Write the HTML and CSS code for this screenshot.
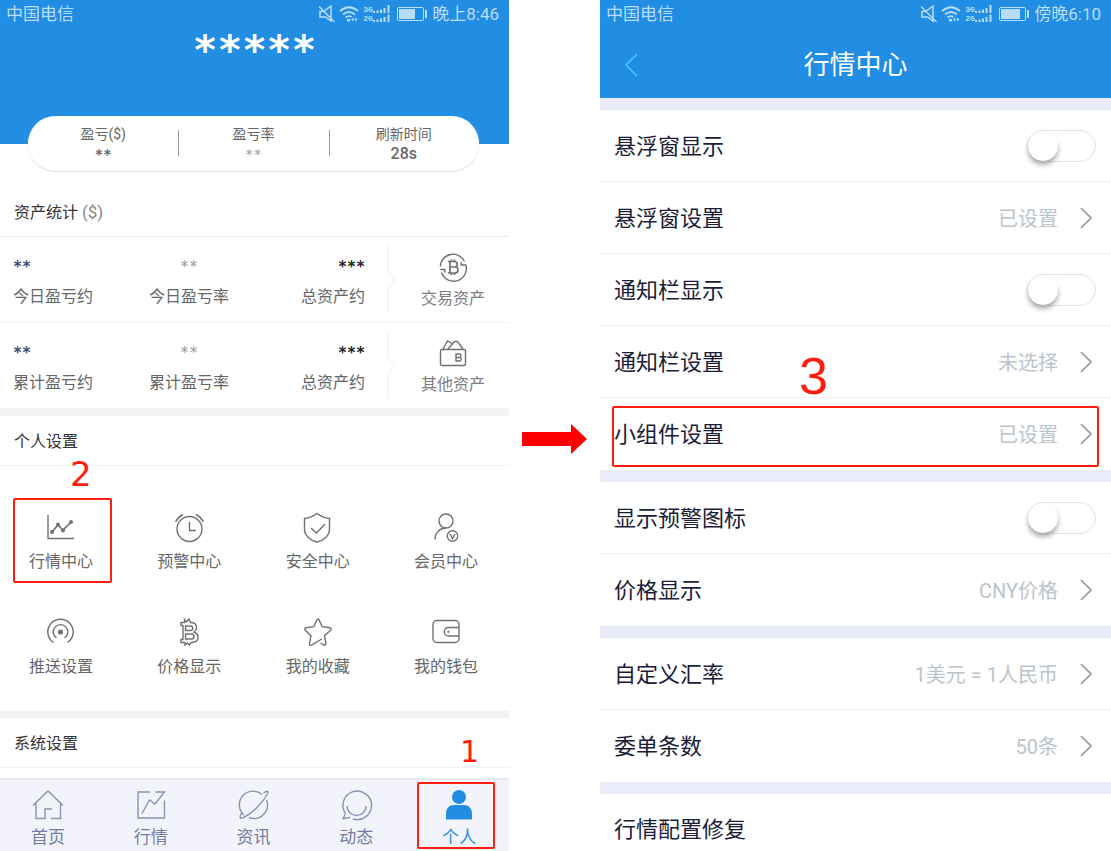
FILE: index.html
```html
<!DOCTYPE html>
<html lang="zh-CN">
<head>
<meta charset="utf-8">
<title>行情中心 小组件设置</title>
<link rel="stylesheet" href="styles.css">
</head>
<body>
<svg class="defs" aria-hidden="true">
  <symbol id="mute" viewBox="0 0 16 18"><path d="M1 6.500h3.500L12 1v15L6.500 12H1zM0 1.500L15.500 17"/></symbol>
  <symbol id="wifi" viewBox="0 0 20 16"><path d="M1 5Q10-2.500 19 5M4 8.500Q10 3.500 16 8.500M6.500 11.500Q9.500 9 12.500 11"/><path class="solid" d="M8 13h3v2.500H8zM12 13.500l2.500-2v4zM18.500 13.500l-2.500-2v4z"/></symbol>
  <symbol id="bars" viewBox="0 0 18 18"><path d="M1 6v2M4.500 5.500V8M8 4.500V8M11.500 3v5M15.500 0v8M1 15v2M4.500 14.500V17M8 13.500V17M11.500 12v5M15.500 9.500V17"/></symbol>
  <symbol id="notch" viewBox="0 0 10 68"><path d="M1 0v27l7 8-7 8v25"/></symbol>
  <symbol id="chevron" viewBox="0 0 12 22"><path d="M1 1l10 10L1 21"/></symbol>
</svg>
<main class="board">
  <section class="phone">
    <header class="hero">
      <div class="status">
        <span>中国电信</span>
        <div class="status-right">
          <svg class="ic-mute"><use href="#mute"/></svg>
          <svg class="ic-wifi"><use href="#wifi"/></svg>
          <span class="nets"><b>3G</b><b>2G</b></span>
          <svg class="ic-bars"><use href="#bars"/></svg>
          <span class="battery"><i class="low"></i></span>
          <span>晚上8:46</span>
        </div>
      </div>
      <div class="secret">*****</div>
    </header>
    <div class="pill">
      <div><span>盈亏($)</span><b class="stars">**</b></div>
      <div><span>盈亏率</span><b class="stars faint">**</b></div>
      <div><span>刷新时间</span><b>28s</b></div>
    </div>
    <h2 class="heading first">资产统计 <small>($)</small></h2>
    <div class="assets">
      <div class="stats">
        <div><b class="stars navy">**</b><span>今日盈亏约</span></div>
        <div><b class="stars faint">**</b><span>今日盈亏率</span></div>
        <div><b class="stars dark">***</b><span>总资产约</span></div>
      </div>
      <svg class="notch"><use href="#notch"/></svg>
      <button class="action" type="button">
        <svg class="icon" viewBox="0 0 32 32"><path d="M3.300 15.500A12.700 12.700 0 0 1 27.500 10.500M28.700 13.500A12.700 12.700 0 0 1 4.500 21.500M28.700 14h-4.500v-3M3.300 18.500h4.500v3"/><path class="thick" d="M11 10.500h6.500a2.700 2.700 0 0 1 0 5.500H13h5a3 3 0 0 1 0 6h-7M13 10.500V22M14.500 8.500v2M17.500 8.500v2M14.500 22v2M17.500 22v2"/></svg>
        <span>交易资产</span>
      </button>
    </div>
    <div class="assets">
      <div class="stats">
        <div><b class="stars navy">**</b><span>累计盈亏约</span></div>
        <div><b class="stars faint">**</b><span>累计盈亏率</span></div>
        <div><b class="stars dark">***</b><span>总资产约</span></div>
      </div>
      <svg class="notch"><use href="#notch"/></svg>
      <button class="action" type="button">
        <svg class="icon" viewBox="0 0 32 32"><rect x="3.500" y="12.500" width="25" height="16" rx="1.500"/><path d="M6 12l4.500-8 4.500 2.500M11 12l6.500-7.500h3L26 12"/><path d="M19 17h3.200a1.600 1.600 0 0 1 0 3.500H19h3.500a1.700 1.700 0 0 1 0 3.500H19z"/></svg>
        <span>其他资产</span>
      </button>
    </div>
    <div class="band"></div>
    <h2 class="heading">个人设置</h2>
    <div class="tiles">
      <button class="tile" type="button">
        <svg class="icon" viewBox="0 0 32 32"><path d="M3 4v23.500h26"/><path class="thick" d="M7 21l6-7 5 5 8-8"/><g class="solid"><circle cx="7" cy="21" r="2"/><circle cx="13" cy="13.500" r="2"/><circle cx="18" cy="19.500" r="2"/><circle cx="26" cy="11" r="2"/></g></svg>
        <span>行情中心</span><i class="ring"></i><b class="note two">2</b>
      </button>
      <button class="tile" type="button">
        <svg class="icon" viewBox="0 0 32 32"><circle cx="16.500" cy="18" r="12.500"/><path d="M2.500 11Q5 6 10 3.500M23 3.500Q28 6 30.500 11M16.500 11v8.500h6.500"/></svg>
        <span>预警中心</span>
      </button>
      <button class="tile" type="button">
        <svg class="icon" viewBox="0 0 32 32"><path d="M15 2.500C11 5.500 7 7 2.500 7.500V18C2.500 25 9 30 15 31c6-1 12.500-6 12.500-13V7.500C23 7 19 5.500 15 2.500zM9 17l5.500 5 8.500-9"/></svg>
        <span>安全中心</span>
      </button>
      <button class="tile" type="button">
        <svg class="icon" viewBox="0 0 32 32"><circle cx="16" cy="10" r="7"/><path d="M16 17C10 17 5 21.500 5 28.500"/><circle cx="22.500" cy="25" r="5.200"/><path d="M20 23l2.500 4.500L25 23"/></svg>
        <span>会员中心</span>
      </button>
      <button class="tile" type="button">
        <svg class="icon" viewBox="0 0 32 32"><path d="M8.500 26.500A12.700 12.700 0 1 1 22.500 26.500M11.500 22A7.300 7.300 0 1 1 19.500 22"/><circle class="solid" cx="15.500" cy="16" r="2.600"/></svg>
        <span>推送设置</span>
      </button>
      <button class="tile" type="button">
        <svg class="icon" viewBox="0 0 32 32"><path d="M8 6.500h3.500v-3l2 2.500L16 3l1.500 3.500C22 6.500 23.500 9 23.500 11.500 23.500 14 22.500 15 21 16c3 1 4 3 4 5.500 0 3.500-3 5-7 5L16.500 29l-2-2-2.500 2v-2.500H8v-3h2v-14H8z"/><path d="M12.500 10h5a2.200 2.200 0 0 1 0 4.500h-5zM12.500 18h6a2.300 2.300 0 0 1 0 5h-6z"/></svg>
        <span>价格显示</span>
      </button>
      <button class="tile" type="button">
        <svg class="icon" viewBox="0 0 32 32"><path d="M20 23l-4.500 2.500-6 3.700q-2 .800-2-1.500l1.500-8-5.700-5.500q-1.500-2 1-2.500l7.500-1 3-6.500q1.200-2 2.400 0l3 6.500 7.500 1q2.500.500 1 2.500L22.500 19.500l1.500 8q0 2.300-2 1.500l-3.500-2"/></svg>
        <span>我的收藏</span>
      </button>
      <button class="tile" type="button">
        <svg class="icon" viewBox="0 0 32 32"><rect x="3" y="4.500" width="26" height="22" rx="4"/><path d="M29 11.500H18.500a4 4 0 0 0 0 8.500H29"/><circle class="solid" cx="18.500" cy="15.800" r="1.100"/></svg>
        <span>我的钱包</span>
      </button>
    </div>
    <div class="band"></div>
    <h2 class="heading">系统设置</h2>
    <nav class="tabs">
      <a href="#home"><svg class="icon" viewBox="0 0 32 32"><path d="M1 16.500L16 2l15 14.500M4 14v15.500h9V20h7M28.500 14v15.500H19"/></svg><span>首页</span></a>
      <a href="#market"><svg class="icon" viewBox="0 0 32 32"><path d="M15 3H3v26h26.500V11.500M20.500 3h9L20 15l-5.500-4L7 24.500"/></svg><span>行情</span></a>
      <a href="#news"><svg class="icon" viewBox="0 0 32 32"><path d="M24 5.500A13.500 13.500 0 0 0 6 26M28.500 11A13.500 13.500 0 0 1 11 28.500M3.500 24C1 29 2 30.500 5.500 28.500 15 24 25 13 29.500 5 31 1.500 29 1.500 25.500 4"/></svg><span>资讯</span></a>
      <a href="#feed"><svg class="icon" viewBox="0 0 32 32"><path d="M5.500 24.500A14.300 14.300 0 1 1 13 30M5.500 24.500L3 29.500l7-1M7 17a9.500 9.500 0 0 0 19 0"/></svg><span>动态</span></a>
      <a class="current" href="#me"><svg class="icon" viewBox="0 0 32 32"><g class="solid"><circle cx="16" cy="8" r="7"/><path d="M3 30.500V25c0-6 3.500-9 8-9h10c4.500 0 8 3 8 9v5.500z"/></g></svg><span>个人</span><i class="ring"></i><b class="note one">1</b></a>
    </nav>
  </section>

  <div class="between"><svg class="arrow" viewBox="0 0 65 30"><path d="M0 8h49V0l16 15-16 15v-8H0z"/></svg></div>

  <section class="phone">
    <header class="bar">
      <div class="status">
        <span>中国电信</span>
        <div class="status-right">
          <svg class="ic-mute"><use href="#mute"/></svg>
          <svg class="ic-wifi"><use href="#wifi"/></svg>
          <span class="nets"><b>3G</b><b>2G</b></span>
          <svg class="ic-bars"><use href="#bars"/></svg>
          <span class="battery"><i></i></span>
          <span>傍晚6:10</span>
        </div>
      </div>
      <div class="titlebar">
        <button class="back" type="button" aria-label="返回"><svg viewBox="0 0 14 24"><path d="M13 1L2 12l11 11"/></svg></button>
        <h1>行情中心</h1>
      </div>
    </header>
    <div class="group">
      <label class="row"><span>悬浮窗显示</span><input class="switch" type="checkbox"></label>
      <button class="row" type="button"><span>悬浮窗设置</span><em>已设置</em><svg class="chev"><use href="#chevron"/></svg></button>
      <label class="row"><span>通知栏显示</span><input class="switch" type="checkbox"></label>
      <button class="row" type="button"><span>通知栏设置</span><em>未选择</em><svg class="chev"><use href="#chevron"/></svg></button>
      <button class="row" type="button"><span>小组件设置</span><em>已设置</em><svg class="chev"><use href="#chevron"/></svg><i class="ring"></i><b class="note three">3</b></button>
    </div>
    <div class="group">
      <label class="row"><span>显示预警图标</span><input class="switch" type="checkbox"></label>
      <button class="row" type="button"><span>价格显示</span><em>CNY价格</em><svg class="chev"><use href="#chevron"/></svg></button>
    </div>
    <div class="group">
      <button class="row" type="button"><span>自定义汇率</span><em>1美元 = 1人民币</em><svg class="chev"><use href="#chevron"/></svg></button>
      <button class="row" type="button"><span>委单条数</span><em>50条</em><svg class="chev"><use href="#chevron"/></svg></button>
    </div>
    <div class="group last">
      <button class="row" type="button"><span>行情配置修复</span></button>
    </div>
  </section>
</main>
</body>
</html>
```

FILE: styles.css
```css
* { box-sizing: border-box; }
body {
  margin: 0;
  background: #fff;
  color: #666;
  font: 16px/24px Roboto, "Noto Sans CJK SC", sans-serif;
}
button { margin: 0; padding: 0; border: 0; background: none; color: inherit; font: inherit; }
a { color: inherit; text-decoration: none; }
h1, h2 { margin: 0; font-weight: 400; }
i, em { font-style: normal; }
svg { display: block; fill: none; stroke: currentColor; overflow: visible; }
.solid { fill: currentColor; stroke: none; }
.defs { position: absolute; width: 0; height: 0; }

.board { display: grid; grid-template-columns: 509fr 91px 511fr; align-items: start; }
.phone { min-width: 0; }

/* status bar */
.status {
  display: flex;
  justify-content: space-between;
  align-items: center;
  height: 28px;
  padding: 0 10px 0 6px;
  color: #b9dcf8;
  font-size: 17px;
}
.status-right { display: flex; align-items: center; }
.ic-mute { width: 16px; height: 18px; margin-right: 4px; stroke-width: 1.5; }
.ic-wifi { width: 20px; height: 16px; margin-right: 4px; stroke-width: 1.7; }
.ic-bars { width: 18px; height: 18px; margin-right: 6px; stroke-width: 2; }
.nets {
  display: flex;
  flex-direction: column;
  width: 10px;
  font: 8px/9px "Liberation Mono", monospace;
}
.battery {
  position: relative;
  width: 27px;
  height: 14px;
  margin-right: 8px;
  padding: 1px;
  border: 1px solid currentColor;
  border-radius: 2px;
}
.battery i { display: block; width: 19px; height: 10px; background: currentColor; }
.battery .low { width: 16px; }
.battery::after {
  content: "";
  position: absolute;
  top: 2px;
  right: -4px;
  width: 2px;
  height: 8px;
  background: currentColor;
}

/* profile screen */
.hero { height: 144px; background: #218de3; }
.secret {
  color: #fff;
  text-align: center;
  font: bold 41px/44px "DejaVu Sans Mono", monospace;
}
.pill {
  display: grid;
  grid-template-columns: repeat(3, 1fr);
  position: relative;
  height: 55px;
  margin: -28px 30px 17px 28px;
  padding-top: 6px;
  border-radius: 28px;
  background: #fff;
  box-shadow: 0 1px 1px #ddd;
  font-size: 14px;
}
.pill div { display: flex; flex-direction: column; align-items: center; line-height: 24px; }
.pill div + div {
  background: linear-gradient(#999, #999) 0 8px / 1px 26px no-repeat;
}
.pill b { font-size: 16px; font-weight: 500; line-height: 16px; }
.stars, .pill .stars { font: bold 15px/20px "DejaVu Sans Mono", monospace; }
.pill .stars { font-size: 14px; line-height: 16px; }
.faint, .pill .faint { color: #999; font-weight: 400; }
.navy { color: #3e4a78; }
.dark { color: #222; }

.heading {
  height: 50px;
  padding-left: 14px;
  border-bottom: 1px solid #f3f3f5;
  color: #333;
  font-size: 16px;
  line-height: 51px;
}
.heading.first { height: 49px; border-color: #e9ebf1; line-height: 49px; }
.heading small { color: #888; font-size: 17px; }
.assets {
  display: grid;
  grid-template-columns: 1fr 10px 112px;
  height: 86px;
  border-bottom: 1px solid #f0f0f2;
}
.stats { display: grid; grid-template-columns: repeat(3, 1fr); padding: 20px 22px 0 13px; }
.stats div { display: flex; flex-direction: column; gap: 8px; }
.stats div:nth-child(2) { align-items: center; }
.stats div:nth-child(3) { align-items: flex-end; }
.notch { width: 10px; height: 68px; margin-top: 8px; color: #eee; }
.action { display: flex; flex-direction: column; align-items: center; gap: 4px; padding-top: 14px; color: #7c7e84; }
.icon { width: 32px; height: 32px; stroke-width: 1.4; color: #707070; }
.thick { stroke-width: 1.7; }
.band { height: 7px; background: #f1f2f4; }

.tiles {
  display: grid;
  grid-template-columns: repeat(4, 96px);
  justify-content: space-between;
  row-gap: 42px;
  padding: 45px 15px 32px 13px;
}
.tile { position: relative; display: flex; flex-direction: column; align-items: center; gap: 7px; }

.tabs {
  display: flex;
  justify-content: space-between;
  margin-top: 10px;
  padding: 9px 10px 2px 8px;
  border-top: 2px solid #e8e9ef;
  background: #f3f4fb;
  color: #737ca3;
  font-size: 17px;
}
.tabs a { position: relative; display: flex; flex-direction: column; align-items: center; gap: 4px; width: 80px; }
.tabs .icon { color: #8a92b5; }
.tabs .current, .tabs .current .icon { color: #218de3; }

/* marks over the screens */
.ring { position: absolute; border: 2px solid #ff1c10; border-radius: 2px; pointer-events: none; }
.tile .ring { inset: -13px -3px -9px 0; }
.tabs .ring { inset: -7px 4px 0 -2px; }
.row .ring { inset: 8px 12px 3px 12px; }
.note { position: absolute; color: #ff1c10; font: 30px/30px "DejaVu Sans", sans-serif; }
.note.one { top: -52px; left: 41px; }
.note.two { top: -52px; left: 57px; font-size: 34px; }
.note.three { top: -48px; left: 199px; font: 52px/52px "Liberation Sans", sans-serif; }

/* arrow */
.between { padding: 424px 4px 0 13px; }
.arrow { width: 65px; height: 30px; margin: 0; fill: #f00; stroke: none; }

/* settings screen */
.bar { height: 98px; background: #218de3; }
.titlebar {
  display: grid;
  grid-template-columns: 60px 1fr 60px;
  align-items: center;
  height: 74px;
  color: #fff;
}
.titlebar h1 { text-align: center; font-size: 26px; line-height: 40px; }
.back { padding-left: 24px; color: #3bcbff; }
.back svg { width: 14px; height: 24px; stroke-width: 1.6; }
.group { border-top: 12px solid #ebecf9; }
.row {
  position: relative;
  display: flex;
  align-items: center;
  width: 100%;
  height: 72px;
  padding: 0 15px 0 14px;
  border-bottom: 1px solid #ededf1;
  color: #1a1c38;
  font-size: 22px;
  line-height: 32px;
}
.row:last-child { border-bottom: 0; }
.row span { flex: 1; padding-top: 2px; text-align: left; }
.row em { margin-right: 22px; padding-top: 2px; color: #bcc4ca; font-size: 20px; }
.chev { width: 12px; height: 22px; margin-right: 4px; color: #999; stroke-width: 1.6; }
.last .row { height: 56px; padding-top: 14px; }
.switch {
  appearance: none;
  width: 69px;
  height: 32px;
  margin: 0;
  border: 1px solid #e2e2e2;
  border-radius: 16px;
  background: #fff;
}
.switch::before {
  content: "";
  display: block;
  width: 30px;
  height: 30px;
  border-radius: 50%;
  background: #fff;
  box-shadow: 0 4px 5px #aaa;
}
.switch:checked::before { margin-left: auto; }
```
